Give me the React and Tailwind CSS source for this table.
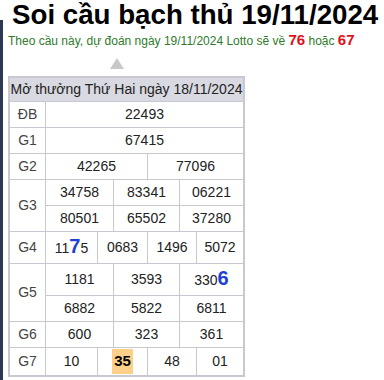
import React from 'react'

const font = { fontFamily: '"Liberation Sans", Arial, sans-serif' }

function Big({ children }) {
  return <span className="text-[20px] font-bold leading-none text-[#1f3fd6]">{children}</span>
}

function Cell({ w, h = 'h-[25px]', children }) {
  return (
    <div className={`${w} ${h} flex items-center justify-center bg-white text-[14px] text-[#222]`}>
      {children}
    </div>
  )
}

function Label({ children }) {
  return (
    <div className="flex w-[35px] shrink-0 items-center justify-center bg-white text-[14px] text-[#444]">
      {children}
    </div>
  )
}

const w1 = ['w-[197px]']
const w2 = ['w-[101px]', 'w-[95px]']
const w3 = ['w-[67px]', 'w-[65px]', 'w-[63px]']
const w4 = ['w-[51px]', 'w-[49px]', 'w-[48px]', 'w-[46px]']

function Line({ widths, values, h }) {
  return (
    <div className="flex gap-px">
      {values.map((v, i) => (
        <Cell key={i} w={widths[i]} h={h}>
          {v}
        </Cell>
      ))}
    </div>
  )
}

function Row({ label, children }) {
  return (
    <div className="flex gap-px">
      <Label>{label}</Label>
      <div className="flex flex-col gap-px">{children}</div>
    </div>
  )
}

export default function App() {
  return (
    <div className="relative h-[380px] w-[384px] overflow-hidden bg-white" style={font}>
      {/* mép tối bên trái */}
      <div className="absolute bottom-0 left-0 top-[20px] w-[3px] bg-[#2d3953]" />

      <h1 className="whitespace-nowrap pl-[12px] text-[27.7px] font-bold leading-[30px] text-black">
        Soi cầu bạch thủ 19/11/2024
      </h1>
      <p className="mt-[2px] whitespace-nowrap pl-[8px] text-[12px] leading-[16px] text-[#2f7a2a]">
        Theo cầu này, dự đoán ngày 19/11/2024 Lotto sẽ về{' '}
        <span className="text-[15px] font-bold text-[#e0101a]">76</span> hoặc{' '}
        <span className="text-[15px] font-bold text-[#e0101a]">67</span>
      </p>

      <div className="ml-[110px] mt-[9px] h-0 w-0 border-b-[11px] border-l-[7px] border-r-[7px] border-b-[#c8c8c8] border-l-transparent border-r-transparent" />

      <div className="ml-[8px] mt-[7px] w-[237px] border border-[#c8c8d0] bg-[#c8c8d0] p-px">
        <div className="flex flex-col gap-px">
          <div className="flex h-[23px] items-center justify-center bg-[#d9d9e1] text-[14px] text-[#222]">
            Mở thưởng Thứ Hai ngày 18/11/2024
          </div>
          <Row label="ĐB">
            <Line widths={w1} values={['22493']} />
          </Row>
          <Row label="G1">
            <Line widths={w1} values={['67415']} />
          </Row>
          <Row label="G2">
            <Line widths={w2} values={['42265', '77096']} />
          </Row>
          <Row label="G3">
            <Line widths={w3} values={['34758', '83341', '06221']} />
            <Line widths={w3} values={['80501', '65502', '37280']} />
          </Row>
          <Row label="G4">
            <Line
              widths={w4}
              h="h-[31px]"
              values={[
                <span key="a">
                  11<Big>7</Big>5
                </span>,
                '0683',
                '1496',
                '5072',
              ]}
            />
          </Row>
          <Row label="G5">
            <Line
              widths={w3}
              h="h-[31px]"
              values={[
                '1181',
                '3593',
                <span key="b">
                  330<Big>6</Big>
                </span>,
              ]}
            />
            <Line widths={w3} values={['6882', '5822', '6811']} />
          </Row>
          <Row label="G6">
            <Line widths={w3} values={['600', '323', '361']} />
          </Row>
          <Row label="G7">
            <Line
              widths={w4}
              h="h-[27px]"
              values={[
                '10',
                <span key="c" className="bg-[#fcd088] px-[2px] py-px text-[15px] font-bold text-black">
                  35
                </span>,
                '48',
                '01',
              ]}
            />
          </Row>
        </div>
      </div>
    </div>
  )
}
